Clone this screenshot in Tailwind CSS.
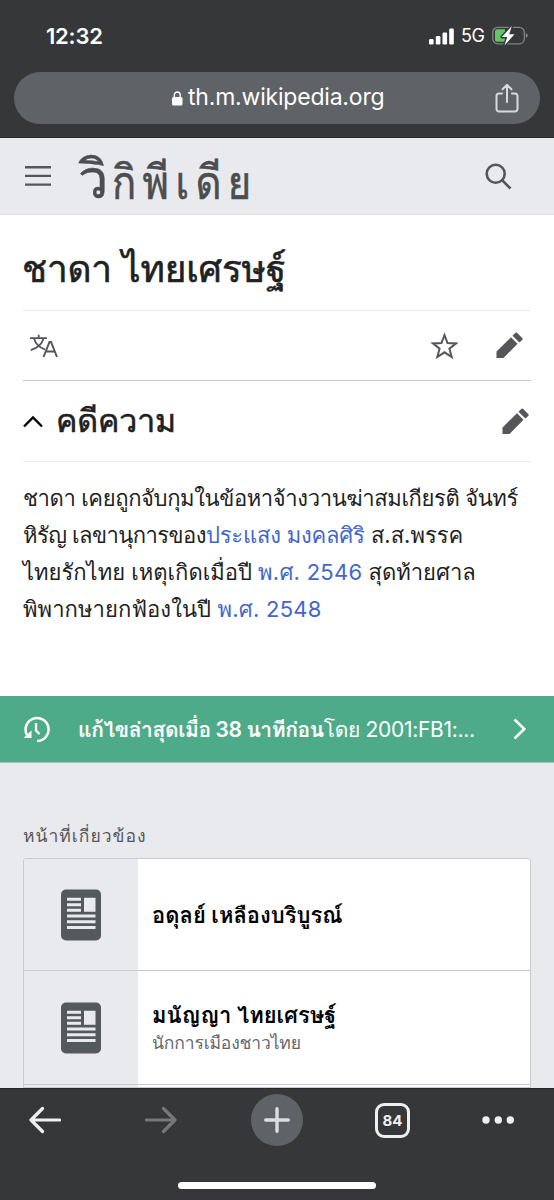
<!DOCTYPE html>
<html lang="th">
<head>
<meta charset="utf-8">
<meta name="viewport" content="width=device-width, initial-scale=1">
<title>ชาดา ไทยเศรษฐ์</title>
<script src="https://cdn.jsdelivr.net/npm/@tailwindcss/browser@4"></script>
</head>
<body class="w-[554px] h-[1200px] overflow-hidden bg-white text-[#202122] font-['Inter','Loma','Noto_Sans_Thai',sans-serif]">
<div class="flex flex-col w-[554px] h-[1200px] overflow-hidden whitespace-nowrap">

  <!-- Browser chrome -->
  <header class="h-[138px] shrink-0 bg-[#363739] border-b border-[#252628] flex flex-col">
    <div class="h-[72px] flex items-center justify-between pl-[46px] pr-[26px]">
      <span class="text-white text-[22px] font-semibold leading-none tracking-[-0.2px]">12:32</span>
      <div class="flex items-center">
        <svg class="w-[25px] h-[17px]" viewBox="0 0 25 17" fill="#fff"><rect x="0" y="11" width="4.6" height="5.5" rx="1.2"/><rect x="6.8" y="8" width="4.6" height="8.500" rx="1.2"/><rect x="13.500" y="4.500" width="4.600" height="12" rx="1.2"/><rect x="20.200" y="0.500" width="4.600" height="16" rx="1.2"/></svg>
        <span class="ml-[7px] w-[24px] text-white text-[18px] leading-none tracking-[-0.5px]">5G</span>
        <svg class="ml-[7px] w-[36px] h-[20px]" viewBox="0 0 36 20"><rect x=".8" y="1.300" width="31.500" height="16.500" rx="5" fill="none" stroke="#828384" stroke-width="1.300"/><path d="M33.800 7v5q2-.6 2-2.500T33.800 7z" fill="#828384"/><path d="M5 3.300h8v12.500H5a2 2 0 0 1-2-2V5.300a2 2 0 0 1 2-2z" fill="#65c466"/><path d="M19.800 0 9.800 11h5.400L12.500 19.500l10-11.300h-5.300z" fill="#fff" stroke="#363739" stroke-width="2.800" paint-order="stroke" stroke-linejoin="round"/></svg>
      </div>
    </div>
    <div class="ml-[14px] w-[526px] h-[52px] rounded-full bg-[#5f6266] flex items-center pl-[158px] pr-[20px]">
      <svg class="w-[11px] h-[15px]" viewBox="0 0 11 15"><rect x="0" y="6" width="10.500" height="8.500" rx="1.500" fill="#fff"/><path d="M2.300 7V4a2.950 2.950 0 0 1 5.900 0v3" fill="none" stroke="#fff" stroke-width="1.400"/></svg>
      <span class="ml-[5px] text-white text-[23px] leading-none tracking-[-0.2px] pb-[2px]">th.m.wikipedia.org</span>
      <svg class="ml-auto w-[26px] h-[31px]" viewBox="0 0 26 31" fill="none" stroke="#d9dadb" stroke-width="2" stroke-linecap="round" stroke-linejoin="round"><path d="M8 10.500H5A2.500 2.500 0 0 0 2.500 13v13A2.500 2.500 0 0 0 5 28.500h16a2.500 2.500 0 0 0 2.500-2.500V13a2.500 2.500 0 0 0-2.500-2.500h-3M13 19V2M8.500 6.300 13 1.800l4.500 4.500"/></svg>
    </div>
  </header>

  <!-- Site header -->
  <div class="h-[77px] shrink-0 bg-[#e9eaee] border-b border-[#dfe0e4] flex items-center pl-[25px] pr-[42px]">
    <svg class="w-[27px] h-[22px]" viewBox="0 0 27 22" fill="#54565a"><path d="M0 1h26v2.400H0zM0 9.700h26v2.400H0zM0 18.400h26v2.400H0z"/></svg>
    <span class="ml-[26px] mt-[6px] h-[76px] flex items-baseline text-[#4b4d50] leading-[76px] tracking-[6.400px] [-webkit-text-stroke:0.5px_#4b4d50]"><span class="text-[54px] w-[34px]">วิ</span><span class="text-[40px] scale-y-[1.18] origin-[0_62%]">กิพีเดีย</span></span>
    <svg class="ml-auto w-[27px] h-[27px]" viewBox="0 0 27 27" fill="none" stroke="#54565a" stroke-width="2.600"><circle cx="10.700" cy="10.700" r="9"/><path d="m17 17 8.500 8.500"/></svg>
  </div>

  <!-- Article -->
  <main class="h-[481px] shrink-0 px-[23px] flex flex-col">
    <h1 class="h-[96px] pt-[12px] flex items-center border-b border-[#eaecf0] text-[37px] leading-none tracking-[-0.2px] [-webkit-text-stroke:0.6px_#202122]"><span class="-ml-px">ชาดา ไทยเศรษฐ์</span></h1>
    <div class="h-[70px] flex items-center border-b border-[#c4c6ca] pl-[7px] pr-[8px]">
      <svg class="w-[29px] h-[24px]" viewBox="0 0 29 24" fill="none" stroke="#54565a" stroke-width="1.800"><path d="M0 4.200h17M8.700 .8v3.400M4 4.500c1.500 5 5 9 11 10.800M13.500 4.500C12 10 7 14.200.8 16.200"/><path d="m13.500 23 6-15h1.500l6 15M15.500 17.500h9.500" stroke-width="2"/></svg>
      <svg class="ml-auto w-[28px] h-[28px]" viewBox="0 0 28 28" fill="none" stroke="#54565a" stroke-width="2"><path d="m14.500 3 3 8 8.600.4-6.700 5.300 2.300 8.300-7.200-4.700L7.300 25l2.300-8.300-6.700-5.300 8.600-.4z"/></svg>
      <svg class="ml-[38px] w-[27px] h-[27px]" viewBox="0 0 27 27" fill="#54565a"><path d="M0.500 19.500 15 5.200l6.500 6.500L7.500 26H.5zM16.500 3.700 19.200 1q1-1 2 0l5 5q1 1 0 2L23.400 10.400z"/></svg>
    </div>
    <div class="h-[81px] flex items-center border-b border-[#eaecf0] pr-[2px]">
      <svg class="w-[20px] h-[13px]" viewBox="0 0 20 13" fill="none" stroke="#000" stroke-width="2.300"><path d="m1 11.500 9-9 9 9"/></svg>
      <h2 class="ml-[13px] text-[32px] leading-none tracking-[-0.1px] [-webkit-text-stroke:0.6px_#202122]">คดีความ</h2>
      <svg class="ml-auto w-[27px] h-[27px]" viewBox="0 0 27 27" fill="#54565a"><path d="M0.500 19.500 15 5.200l6.500 6.500L7.500 26H.5zM16.500 3.700 19.200 1q1-1 2 0l5 5q1 1 0 2L23.400 10.400z"/></svg>
    </div>
    <div class="mt-[18px] text-[22px] leading-[37px]">
      <p class="h-[37px] tracking-[-0.38px]">ชาดา เคยถูกจับกุมในข้อหาจ้างวานฆ่าสมเกียรติ จันทร์</p>
      <p class="h-[37px]"><span class="tracking-[-0.55px]">หิรัญ เลขานุการของ</span><a class="text-[#4466cc] tracking-[-0.2px]">ประแสง มงคลศิริ</a> ส.ส.พรรค</p>
      <p class="h-[37px]">ไทยรักไทย เหตุเกิดเมื่อปี <a class="text-[#4466cc] tracking-[0.25px]">พ.ศ. 2546</a> สุดท้ายศาล</p>
      <p class="h-[37px] tracking-[0.08px]">พิพากษายกฟ้องในปี <a class="text-[#4466cc] tracking-[0.25px]">พ.ศ. 2548</a></p>
    </div>
  </main>

  <!-- Last edit -->
  <div class="h-[67px] shrink-0 bg-[#4eab89] border-b border-[#9fc5bb] flex items-center pl-[23px] pr-[27px] text-white">
    <svg class="w-[27px] h-[27px]" viewBox="0 0 27 27" fill="none" stroke="#fff" stroke-width="2.500"><path d="M4 19A11.500 11.500 0 1 1 14 25"/><path d="M.5 22h8v-7.500z" fill="#fff" stroke="none"/><path d="M13 7v7.500l3.500 3.500" stroke-width="2.300"/></svg>
    <span class="ml-[28px] text-[21px] leading-none"><b class="font-semibold tracking-[-0.4px]">แก้ไขล่าสุดเมื่อ 38 นาทีก่อน</b><span class="tracking-[-0.3px]">โดย 2001:FB1:...</span></span>
    <svg class="ml-auto w-[14px] h-[22px]" viewBox="0 0 14 22" fill="none" stroke="#fff" stroke-width="2.500"><path d="m1.500 1.500 9.800 9.500-9.800 9.500"/></svg>
  </div>

  <!-- Related pages -->
  <section class="h-[325px] shrink-0 overflow-hidden bg-[#e9eaee] px-[23px] flex flex-col">
    <h3 class="mt-[58px] h-[30px] leading-[30px] text-[17.5px] text-[#54565a] tracking-[1px]">หน้าที่เกี่ยวข้อง</h3>
    <ul class="mt-[7px] w-[508px] h-[240px] border border-[#c8cacf] rounded-t-[3px] bg-white flex flex-col overflow-hidden">
      <li class="h-[112px] shrink-0 border-b border-[#c8cacf] flex">
        <div class="w-[114px] bg-[#e9eaee] flex items-center justify-center">
          <svg class="w-[40px] h-[52px]" viewBox="0 0 40 52"><rect y=".5" width="40" height="51" rx="5" fill="#54595d"/><path d="M6 8.800h14v3H6zM6 14.300h14v3H6zM6 19.800h14v3H6zM23 8.800h11.500v14H23zM6 25.600h28.500v3H6zM6 31.300h28.500v3H6zM6 37h28.500v3H6z" fill="#e9eaee"/></svg>
        </div>
        <div class="pl-[14px] flex items-center"><span class="text-[22px] leading-none font-semibold text-black">อดุลย์ เหลืองบริบูรณ์</span></div>
      </li>
      <li class="h-[114px] shrink-0 border-b border-[#c8cacf] flex">
        <div class="w-[114px] bg-[#e9eaee] flex items-center justify-center">
          <svg class="w-[40px] h-[52px]" viewBox="0 0 40 52"><rect y=".5" width="40" height="51" rx="5" fill="#54595d"/><path d="M6 8.800h14v3H6zM6 14.300h14v3H6zM6 19.800h14v3H6zM23 8.800h11.500v14H23zM6 25.600h28.500v3H6zM6 31.300h28.500v3H6zM6 37h28.500v3H6z" fill="#e9eaee"/></svg>
        </div>
        <div class="pl-[14px] flex flex-col pt-[30px]">
          <span class="h-[28px] leading-[28px] text-[22px] font-semibold text-black">มนัญญา ไทยเศรษฐ์</span>
          <span class="h-[28px] leading-[28px] text-[17.5px] tracking-[-0.15px] text-[#63676c]">นักการเมืองชาวไทย</span>
        </div>
      </li>
      <li class="h-[112px] shrink-0 flex"><div class="w-[114px] bg-[#e9eaee]"></div></li>
    </ul>
  </section>

  <!-- Browser toolbar -->
  <nav class="h-[112px] shrink-0 bg-[#363739] border-t border-[#252628] flex flex-col items-center">
    <div class="w-full h-[62px] flex items-center pl-[29px]">
      <svg class="w-[32px] h-[28px]" viewBox="0 0 32 28" fill="none" stroke="#efeff0" stroke-width="3.200" stroke-linecap="round" stroke-linejoin="round"><path d="M30.500 14H2.500M13.500 2.500 2 14l11.500 11.500"/></svg>
      <svg class="ml-[84px] w-[32px] h-[28px]" viewBox="0 0 32 28" fill="none" stroke="#77787a" stroke-width="3.200" stroke-linecap="round" stroke-linejoin="round"><path d="M1.500 14h28M18.500 2.500 30 14 18.500 25.500"/></svg>
      <div class="ml-[74px] w-[52px] h-[52px] rounded-full bg-[#5f6266] flex items-center justify-center">
        <svg class="w-[26px] h-[26px]" viewBox="0 0 26 26" stroke="#dcdde0" stroke-width="3.400" stroke-linecap="round"><path d="M13 1.700v22.600M1.700 13h22.600"/></svg>
      </div>
      <div class="ml-[72px] w-[35px] h-[35px] rounded-[9px] border-[3px] border-[#efeff0] flex items-center justify-center text-[#efeff0] text-[15px] font-bold leading-none">84</div>
      <svg class="ml-[72px] w-[32px] h-[8px]" viewBox="0 0 32 8" fill="#efeff0"><circle cx="4" cy="4" r="3.700"/><circle cx="16.300" cy="4" r="3.700"/><circle cx="28.300" cy="4" r="3.700"/></svg>
    </div>
    <div class="mt-[31px] w-[198px] h-[7px] rounded-full bg-white"></div>
  </nav>
</div>
</body>
</html>
